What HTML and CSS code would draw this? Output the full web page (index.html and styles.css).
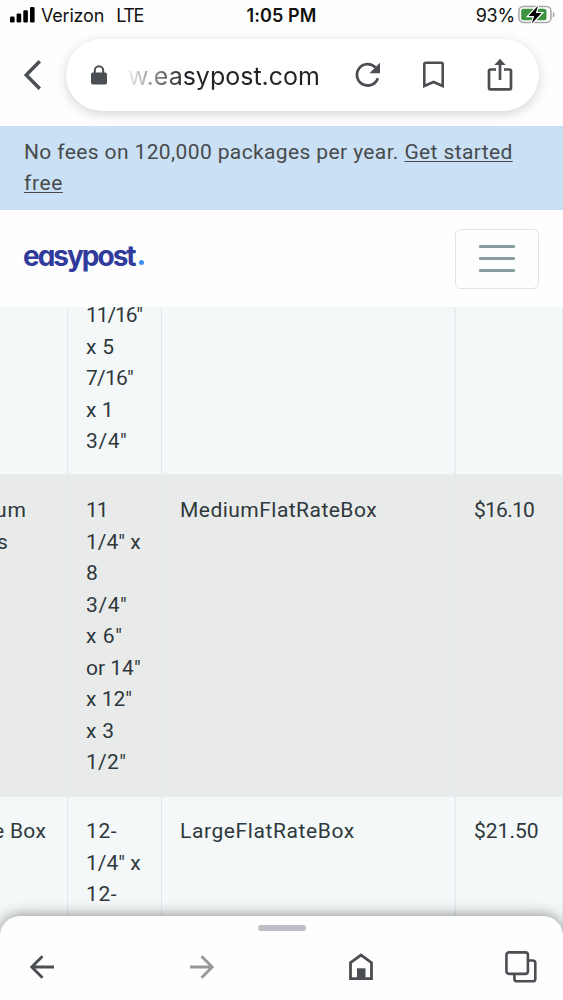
FILE: index.html
```html
<!DOCTYPE html>
<html lang="en">
<head>
<meta charset="utf-8">
<title>EasyPost</title>
<link rel="stylesheet" href="styles.css">
</head>
<body>
<div class="phone">
  <div class="status">
    <div class="carrier">
      <svg width="26" height="16" viewBox="0 0 26 16"><rect x="0" y="9.5" width="4.6" height="6" rx="1.3"/><rect x="6.6" y="6.5" width="4.6" height="9" rx="1.3"/><rect x="13.3" y="3.2" width="4.6" height="12.3" rx="1.3"/><rect x="20" y="0" width="4.6" height="15.5" rx="1.3"/></svg>
      <span class="verizon">Verizon</span><span class="lte">LTE</span>
    </div>
    <div class="clock">1:05 PM</div>
    <div class="power"><span>93%</span>
      <svg width="37" height="20" viewBox="0 0 37 20"><rect x=".9" y="1.4" width="32" height="16" rx="4.5" fill="#fff" stroke="#a6a6a6" stroke-width="1.5"/><rect x="3.2" y="3.7" width="25.3" height="11.5" rx="2.5" fill="#3c9342"/><path d="M34.8 6.7q1.8.7 1.8 3t-1.8 3z" fill="#a6a6a6"/><path d="M20 .8 10.5 11h5.7l-2.4 7.4L23.6 8.1h-5.8z" fill="#000" stroke="#fff" stroke-width="2.4" paint-order="stroke"/></svg>
    </div>
  </div>
  <div class="toolbar">
    <svg class="back" width="20" height="32" viewBox="0 0 20 32"><path d="M16.8 2.2 3.2 16l13.6 13.8" fill="none" stroke="#4b4e52" stroke-width="3.4"/></svg>
    <div class="omnibox">
      <svg class="lock" width="16" height="20" viewBox="0 0 16 20"><path d="M3.8 8V5.4a4.2 4.2 0 0 1 8.4 0V8" fill="none" stroke="#4b4e52" stroke-width="2"/><rect width="16" height="12" y="7.6" rx="1.8" fill="#4b4e52"/></svg>
      <span class="url">w.easypost.com</span>
      <svg class="reload" width="26" height="26" viewBox="0 0 26 26"><path d="M22.8 16.2A10.7 10.7 0 1 1 20.5 5.5" fill="none" stroke="#4b4e52" stroke-width="2.8"/><path d="M25 .8V11.3H14.5z" fill="#4b4e52"/></svg>
      <svg class="mark" width="23" height="28" viewBox="0 0 23 28"><path d="M3.7 1.7h15.6q1.4 0 1.4 1.4V25l-9.2-4-9.2 4V3.1q0-1.4 1.4-1.4z" fill="none" stroke="#4b4e52" stroke-width="2.6"/></svg>
      <svg class="share" width="26" height="34" viewBox="0 0 26 34"><path d="M9 11.5H3.7Q2 11.5 2 13.2v16.5q0 1.7 1.7 1.7h18.6q1.7 0 1.7-1.7V13.2q0-1.7-1.7-1.7H17M13 22V3" fill="none" stroke="#4b4e52" stroke-width="2.7"/><path d="m7.3 7 5.7-6.3L18.7 7z" fill="#4b4e52"/></svg>
    </div>
  </div>
  <div class="banner"><div class="fees">No fees on 120,000 packages per year. <a>Get started</a></div><div class="free"><a>free</a></div></div>
  <div class="header">
    <div class="logo">easypost<i></i></div>
    <div class="menu"><b></b><b></b><b></b></div>
  </div>
  <div class="grid">
    <div class="row top"><div class="c1"></div><div class="c2"><p class="tightest">11/16"</p><p>x 5</p><p class="tighter">7/16"</p><p class="tight">x 1</p><p class="wide">3/4"</p></div><div class="c3"></div><div class="c4"></div></div>
    <div class="row alt"><div class="c1"><p class="um">um</p><p class="s">s</p></div><div class="c2"><p class="tightest">11</p><p class="tight">1/4" x</p><p>8</p><p class="wide">3/4"</p><p class="wide">x 6"</p><p class="tight">or 14"</p><p class="tight">x 12"</p><p>x 3</p><p>1/2"</p></div><div class="c3"><p class="medium">MediumFlatRateBox</p></div><div class="c4"><p class="tighter">$16.10</p></div></div>
    <div class="row last"><div class="c1"><p class="box">e Box</p></div><div class="c2"><p class="wide">12-</p><p class="tight">1/4" x</p><p class="wide">12-</p></div><div class="c3"><p class="wide">LargeFlatRateBox</p></div><div class="c4"><p class="tight">$21.50</p></div></div>
  </div>
  <div class="sheet">
    <div class="handle"></div>
    <div class="nav">
      <svg width="24" height="24" viewBox="0 0 24 24"><path d="M24 12H2.5M12.5 1.2 1.8 12l10.7 10.8" fill="none" stroke="#4b4e52" stroke-width="2.8"/></svg>
      <svg class="forward" width="24" height="24" viewBox="0 0 24 24"><path d="M0 12h21.5M11.5 1.2 22.2 12 11.5 22.8" fill="none" stroke="#96999b" stroke-width="2.8"/></svg>
      <svg class="home" width="24" height="28" viewBox="0 0 24 28"><path d="M1.5 25.6V9.7L12 2l10.5 7.7v15.9z" fill="none" stroke="#4b4e52" stroke-width="2.8"/><path d="M8 15.3h8.5V26H8z" fill="#4b4e52"/></svg>
      <svg width="32" height="32" viewBox="0 0 32 32"><rect x="1.4" y="1.4" width="21.5" height="21.5" rx="2.6" fill="none" stroke="#4b4e52" stroke-width="2.6"/><path d="M23 9.5h4.7q2.6 0 2.6 2.6v15.6q0 2.6-2.6 2.6H12q-2.6 0-2.6-2.6V23" fill="none" stroke="#4b4e52" stroke-width="2.6"/></svg>
    </div>
  </div>
</div>
</body>
</html>
```
FILE: styles.css
```css
* { box-sizing: border-box; }
body { margin: 0; background: #fff; font-family: Roboto, "Liberation Sans", sans-serif; color: #2f383c; }
p { margin: 0; }
svg { display: block; flex: none; }
.phone { position: relative; width: 563px; height: 1000px; overflow: hidden; display: flex; flex-direction: column; background: #fefefe; }
.status { height: 32px; flex: none; display: grid; grid-template-columns: 203px 157px 203px; font-family: Inter, sans-serif; font-size: 18px; line-height: 31px; color: #111; white-space: nowrap; }
.carrier { display: flex; padding-left: 10px; }
.carrier svg { margin-top: 7px; }
.verizon { margin-left: 5px; letter-spacing: -.2px; }
.lte { margin-left: 12px; letter-spacing: -1.3px; }
.clock { text-align: center; font-weight: 600; letter-spacing: .1px; }
.power { display: flex; justify-content: flex-end; padding-right: 8px; }
.power span { letter-spacing: -.2px; }
.power svg { margin: 5px 0 0 3px; }
.toolbar { height: 94px; flex: none; display: flex; padding-top: 7px; }
.back { margin: 20px 0 0 23px; }
.omnibox { width: 473px; height: 72px; margin-left: 23px; border-radius: 36px; background: #fff; box-shadow: 0 3px 12px rgba(0,0,0,.17); display: flex; align-items: center; }
.lock { margin-left: 25px; }
.url { width: 192px; margin-left: 21px; font-family: Inter, sans-serif; font-size: 25px; line-height: 32px; padding-top: 1px; white-space: nowrap; color: transparent; background: linear-gradient(90deg, rgba(32,36,40,.08), #202428 56px); -webkit-background-clip: text; background-clip: text; }
.reload { margin-left: 35px; }
.mark { margin-left: 41px; }
.share { margin-left: 42px; }
.banner { height: 84px; flex: none; background: #cae0f4; padding: 11px 24px 0; font-size: 21px; line-height: 31.5px; color: #484b4d; white-space: nowrap; }
.banner a { text-decoration: underline; text-decoration-thickness: 1px; text-underline-offset: 2px; }
.fees { letter-spacing: .38px; }
.free { letter-spacing: .6px; margin-top: -.6px; }
.header { height: 97px; flex: none; display: flex; justify-content: space-between; padding: 19px 24px 0; }
.logo { font: 700 28px/36px Inter, sans-serif; font-feature-settings: "cv11"; letter-spacing: -2px; color: #303b9c; padding-top: 9px; margin-left: -1px; display: flex; height: 46px; }
.logo i { width: 5px; height: 5px; border-radius: 50%; background: #3f91f2; margin: 22px 0 0 4px; }
.menu { width: 84px; height: 60px; border: 1px solid #e0e2e3; border-radius: 6px; display: flex; flex-direction: column; gap: 9px; align-items: center; padding-top: 15px; }
.menu b { width: 36px; height: 3px; border-radius: 1px; background: #8b9ba3; }
.grid { flex: none; font-size: 21px; line-height: 31.5px; white-space: nowrap; letter-spacing: .3px; }
.tight { letter-spacing: 0; }
.tighter { letter-spacing: -.75px; }
.tightest { letter-spacing: -1.1px; }
.wide { letter-spacing: .6px; }
.medium { letter-spacing: .47px; }
.row { display: grid; grid-template-columns: 68px 94px 294px 107px; background: #f4f8f9; border-bottom: 1px solid #e7edf0; }
.row > div { border-right: 1px solid #e2e9ed; padding: 20px 0 0 18px; }
.row > .c1 { padding-left: 0; }
.row > .c3 { border-right: 2px solid #e7edf1; }
.row.top { height: 168px; grid-template-rows: 167px; overflow: hidden; }
.row.top > .c2 { padding-top: 0; min-height: 0; display: flex; flex-direction: column; justify-content: flex-end; padding-bottom: 16.5px; }
.row.alt { height: 322px; background: #e8ebea; }
.row.alt > div { border-color: #e5ebec; }
.last { height: 203px; }
.row.last > div { padding-top: 19px; }
.um { margin-left: -5px; letter-spacing: .8px; }
.s { margin-left: -3px; }
.box { margin-left: -7px; }
.sheet { position: absolute; left: 0; bottom: 0; width: 563px; height: 84px; background: #fefefe; border-radius: 20px 20px 0 0; box-shadow: 0 -1px 14px rgba(0,0,0,.42); padding-top: 9px; }
.handle { width: 48px; height: 6px; margin: 0 auto; border-radius: 3px; background: #bbbec3; }
.nav { height: 72px; display: flex; justify-content: space-between; align-items: center; padding: 0 26px 0 30px; }
.forward { margin-left: 4px; }
.home { margin-left: 2px; }
```
